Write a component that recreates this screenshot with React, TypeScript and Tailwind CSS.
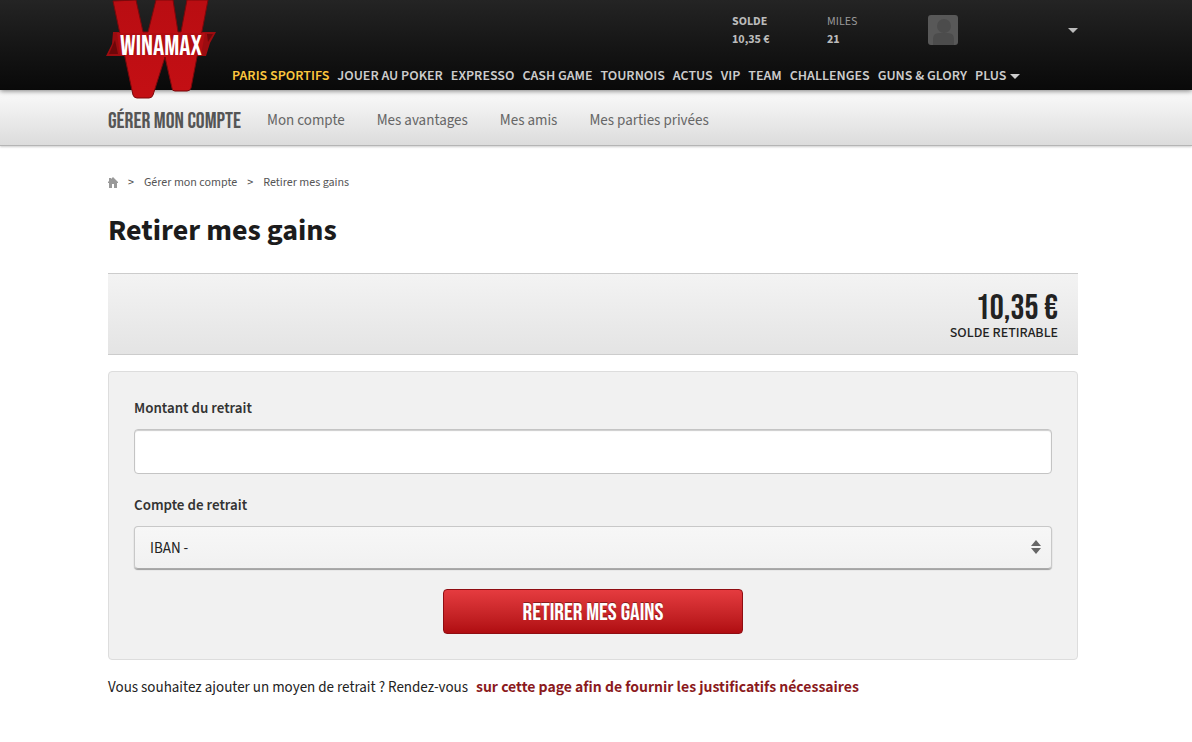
import { useState } from 'react';

type NavItem = {
  label: string;
  active?: boolean;
};

const mainNav: NavItem[] = [
  { label: 'PARIS SPORTIFS', active: true },
  { label: 'JOUER AU POKER' },
  { label: 'EXPRESSO' },
  { label: 'CASH GAME' },
  { label: 'TOURNOIS' },
  { label: 'ACTUS' },
  { label: 'VIP' },
  { label: 'TEAM' },
  { label: 'CHALLENGES' },
  { label: 'GUNS & GLORY' },
];

const accountNav = ['Mon compte', 'Mes avantages', 'Mes amis', 'Mes parties privées'];

function Logo() {
  return (
    <svg viewBox="0 0 112 100" className="w-28 h-[100px]" role="img" aria-label="Winamax">
      <defs>
        <linearGradient id="logoRed" x1="0" y1="0" x2="0" y2="1">
          <stop offset="0" stopColor="#b90d12" />
          <stop offset="1" stopColor="#c40f14" />
        </linearGradient>
      </defs>
      <path d="M0 56 L6 44 L7 32 H110 L104 43 L100 56 Z" fill="#9c0c10" />
      <path d="M3 54 L9 40 L12 54 Z M101 34 H107 L102 42 Z" fill="#6d0709" />
      <path
        d="M7 1 L30 0 L37 32 H42 L50 0 H67 L72 32 H75 L81 0 H102 L85 88 Q84 91 81 91 H69 Q66 91 66 88 L59 57 L47 95 Q46 98 43 98 H31 Q28 98 27 95 Z"
        fill="url(#logoRed)"
        stroke="#7c080b"
      />
      <path d="M11 33 H99 L95 55 H14 Z" fill="#b20d12" />
      <text
        x="55"
        y="55"
        fontSize="28"
        textAnchor="middle"
        fill="#fff"
        className="font-['Bebas_Neue','Liberation_Sans_Narrow',sans-serif]"
      >
        WINAMAX
      </text>
    </svg>
  );
}

function Caret() {
  return (
    <svg viewBox="0 0 10 5" className="w-2.5 h-[5px]" aria-hidden="true">
      <path d="M0 0H10L5 5Z" fill="currentColor" />
    </svg>
  );
}

function Header() {
  return (
    <header className="relative z-10 bg-gradient-to-b from-[#242424] to-[#090909] text-[#ccc] shadow-[0_1px_5px_rgba(0,0,0,0.5)]">
      <div className="relative max-w-[976px] mx-auto pr-1.5 h-[90px] flex flex-col justify-between">
        <a href="#" className="absolute -left-0.5 top-0">
          <Logo />
        </a>
        <div className="flex justify-end pt-[13px] text-xs leading-[18px] text-[#bbb]">
          <div className="w-[95px] font-bold">
            <p>SOLDE</p>
            <p>10,35 €</p>
          </div>
          <div className="w-[101px]">
            <p className="text-[#999]">MILES</p>
            <p className="font-bold">21</p>
          </div>
          <button type="button" className="w-[150px] h-[34px] flex items-center justify-between" aria-label="Mon profil">
            <svg viewBox="0 0 30 30" className="size-[30px]" aria-hidden="true">
              <rect width="30" height="30" rx="3" fill="#585858" />
              <circle cx="16" cy="11" r="7" fill="#4c4c4c" />
              <path d="M5 30V24Q5 18 11 18H20Q26 18 26 24V30Z" fill="#4c4c4c" />
            </svg>
            <Caret />
          </button>
        </div>
        <nav className="flex gap-2 pl-[124px] pb-[5px] text-sm leading-[18px] font-semibold whitespace-nowrap">
          {mainNav.map((item) => (
            <a href="#" key={item.label} className={item.active ? 'text-[#fdc73e]' : ''}>
              {item.label}
            </a>
          ))}
          <button type="button" className="flex items-center gap-1">
            PLUS
            <Caret />
          </button>
        </nav>
      </div>
    </header>
  );
}

function SubHeader() {
  return (
    <div className="bg-gradient-to-b from-[#fbfbfb] to-[#dcdcdc] border-b border-[#b5b5b5] shadow-[0_1px_2px_rgba(0,0,0,0.2)]">
      <nav className="max-w-[976px] mx-auto h-[55px] flex items-center gap-8 pt-[7px] text-[15px] text-[#666]">
        <span className="-mr-1.5 text-[22px] text-[#555] font-['Bebas_Neue','Liberation_Sans_Narrow',sans-serif]">
          GÉRER MON COMPTE
        </span>
        {accountNav.map((label) => (
          <a href="#" key={label}>
            {label}
          </a>
        ))}
      </nav>
    </div>
  );
}

export default function App() {
  const [amount, setAmount] = useState('');

  return (
    <div className="min-h-screen bg-white text-[#222] font-['Source_Sans_3','Noto_Sans_CJK_SC',sans-serif]">
      <Header />
      <SubHeader />

      <main className="max-w-[976px] mx-auto pr-1.5 pt-[29px]">
        <div className="flex items-center gap-2.5 text-xs leading-4 text-[#555]">
          <a href="#" aria-label="Accueil">
            <svg viewBox="0 0 10 12" className="w-2.5 h-3" aria-hidden="true">
              <path d="M5 0L10 5V6H9V11H6V7H4V11H1V6H0V5L1 4V1H3V2Z" fill="#999" />
            </svg>
          </a>
          <span>&gt;</span>
          <a href="#">Gérer mon compte</a>
          <span>&gt;</span>
          <span>Retirer mes gains</span>
        </div>

        <h1 className="mt-5 text-[30px] leading-10 font-bold text-[#1c1c1c]">Retirer mes gains</h1>

        <section className="mt-[22px] h-[82px] px-5 pt-[19px] text-right border-y border-[#ccc] bg-gradient-to-b from-[#f3f3f3] to-[#e4e4e4]">
          <p className="text-[35px] leading-8 font-['Bebas_Neue','Liberation_Sans_Narrow',sans-serif]">10,35 €</p>
          <p className="text-sm leading-4 font-medium">SOLDE RETIRABLE</p>
        </section>

        <form
          className="mt-4 p-[25px] flex flex-col bg-[#f1f1f1] border border-[#ddd] rounded"
          onSubmit={(e) => e.preventDefault()}
        >
          <label htmlFor="amount" className="text-[15px] leading-6 font-semibold text-[#333]">
            Montant du retrait
          </label>
          <input
            id="amount"
            type="text"
            value={amount}
            onChange={(e) => setAmount(e.target.value)}
            className="mt-2 h-[45px] px-4 text-[15px] bg-white border border-[#c4c4c4] rounded shadow-[inset_0_1px_1px_rgba(0,0,0,0.2)]"
          />

          <label htmlFor="account" className="mt-5 text-[15px] leading-6 font-semibold text-[#333]">
            Compte de retrait
          </label>
          <div className="relative mt-2">
            <select
              id="account"
              className="w-full h-[43px] px-[15px] pt-1 appearance-none text-[15px] border border-[#c8c8c8] border-b-[#aaa] rounded bg-gradient-to-b from-[#f7f7f7] to-[#f1f1f1] shadow-[0_1px_1px_rgba(0,0,0,0.35)]"
            >
              <option>IBAN -</option>
            </select>
            <svg
              viewBox="0 0 10 14"
              className="absolute right-[11px] top-[14px] w-2.5 h-3.5 pointer-events-none"
              aria-hidden="true"
            >
              <path d="M5 0L10 6H0ZM5 14L10 8H0Z" fill="#666" />
            </svg>
          </div>

          <button
            type="submit"
            className="mt-5 mx-auto w-[300px] h-[45px] pt-0.5 text-2xl text-white rounded border border-[#8f0d12] bg-gradient-to-b from-[#e53b3f] to-[#b00c11] font-['Bebas_Neue','Liberation_Sans_Narrow',sans-serif] [text-shadow:0_-1px_0_rgba(0,0,0,0.4)]"
          >
            RETIRER MES GAINS
          </button>
        </form>

        <p className="mt-3.5 flex flex-wrap items-baseline gap-x-2 text-[15px] leading-6">
          <span>Vous souhaitez ajouter un moyen de retrait ? Rendez-vous</span>
          <a href="#" className="text-sm leading-6 font-bold text-[#8b1a1d] font-['Noto_Sans_CJK_SC',sans-serif]">
            sur cette page afin de fournir les justificatifs nécessaires
          </a>
        </p>
      </main>
    </div>
  );
}
